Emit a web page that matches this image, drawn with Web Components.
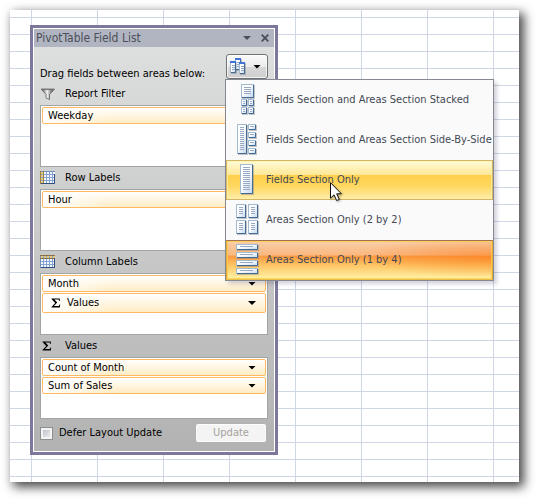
<!DOCTYPE html>
<html lang="en">
<head>
<meta charset="utf-8">
<title>PivotTable Field List</title>
<style>
body { margin: 0; background: #fff; color: #000; font: 11px/16px "DejaVu Sans Condensed", "DejaVu Sans", sans-serif; }
</style>
</head>
<body>
<work-sheet>
  <pivot-panel heading="PivotTable Field List">
    <area-section icon="filter" label="Report Filter"><field-chip>Weekday</field-chip></area-section>
    <area-section icon="rows" label="Row Labels"><field-chip>Hour</field-chip></area-section>
    <area-section icon="columns" label="Column Labels"><field-chip>Month</field-chip><field-chip sigma>Values</field-chip></area-section>
    <area-section icon="sigma" label="Values"><field-chip>Count of Month</field-chip><field-chip>Sum of Sales</field-chip></area-section>
  </pivot-panel>
</work-sheet>
<script>
const page = (x, y, w, h, lines = []) =>
  `<rect x="${x + 1}" y="${y + 1}" width="${w}" height="${h}" fill="#6b7687" opacity=".4"/>
   <rect x="${x + .5}" y="${y + .5}" width="${w - 1}" height="${h - 1}" fill="url(#pg)" stroke="#a3bad3"/>
   <path d="M${x + w - .5} ${y + 1}V${y + h - .5}H${x + 1}" fill="none" stroke="#456a92"/>` +
  lines.map(([lx, ly, lw]) => `<path d="M${lx} ${ly + .5}h${lw}" stroke="#98a9c6"/>`).join('');
const range = (from, to, step) => { const a = []; for (let i = from; i <= to; i += step) a.push(i); return a; };
const svg = (w, h, body) => `<svg width="${w}" height="${h}" viewBox="0 0 ${w} ${h}" aria-hidden="true">
  <defs><linearGradient id="pg" x2="1" y2="1"><stop offset=".4" stop-color="#fff"/><stop offset="1" stop-color="#c3d7ef"/></linearGradient>
  <linearGradient id="fn"><stop stop-color="#333"/><stop offset=".45" stop-color="#f5f5f5"/><stop offset="1" stop-color="#222"/></linearGradient></defs>${body}</svg>`;
const grid = (side) => svg(16, 14,
  `<rect x=".5" y=".5" width="14" height="12" fill="#86a3cf" stroke="#7590b8"/>` +
  range(1, 10, 3).map(y => range(1, 13, 3).map(x =>
    `<rect x="${x}" y="${y}" width="2" height="2" fill="${(side === 'rows' ? x < 4 : y < 3) ? '#e8ce7c' : '#f4f8ff'}"/>`).join('')).join('') +
  (side === 'rows' ? '<path d="M.5 0V13M3.5 0V13" stroke="#9b8244"/>' : '<path d="M0 .5H15M0 3.5H15" stroke="#85704a"/>') +
  `<path d="M14.5 3V12.5H1" fill="none" stroke="#304f80"/>`);
const sigma = svg(10, 10, '<path d="M.5 .5H8.8V3H8.2L7.6 1.6H3.4L6.2 4.6L3 8H7.8L8.6 6.4H9.2L8.8 9.5H.5V8.9L4.2 5L.5 1.1Z" fill="#000"/>');
const icons = {
  filter: svg(16, 13, '<path d="M1 1H14.5L9.5 6.5V11.5L6 10V6.5Z" fill="url(#fn)" stroke="#555" stroke-width=".7"/><path d="M1 1.5H14" stroke="#777"/>'),
  rows: grid('rows'),
  columns: grid('columns'),
  sigma,
  layout: svg(16, 17, [[5, 0], [0, 3], [9, 4]].map(([x, y]) =>
    page(x, y, 6, 12, range(y + 4, y + 9, 2).map(l => [x + 2, l, 3])) + `<path d="M${x} ${y + 1}h6" stroke="#3f73d8" stroke-width="2"/>`).join('')),
  stacked: svg(24, 32, page(6, 0, 13, 14, range(3, 9, 2).map(l => [9, l, 7])) +
    [[6, 15], [13, 15], [6, 23], [13, 23]].map(([x, y]) => page(x, y, 6, 7, [[x + 2, y + 2, 2], [x + 2, y + 4, 2]])).join('')),
  side: svg(24, 32, page(2, 0, 10, 30, range(3, 25, 2).map(l => [5, l, 4])) +
    [0, 8, 16, 24].map(y => page(13, y, 8, 6, [[15, y + 2, 4]])).join('')),
  fields: svg(24, 32, page(5, 0, 13, 30, range(3, 25, 2).map(l => [8, l, 7]))),
  two: svg(24, 32, [[1, 0], [13, 0], [1, 16], [13, 16]].map(([x, y]) =>
    page(x, y, 10, 14, range(y + 3, y + 9, 2).map(l => [x + 3, l, 4]))).join('')),
  four: svg(24, 32, [0, 8, 16, 24].map(y => page(1, y, 22, 6, [[5, y + 2, 13]])).join('')),
};
const define = (name, html, setup) => customElements.define(name, class extends HTMLElement {
  constructor() {
    super();
    const root = this.attachShadow({ mode: 'open' });
    const t = document.createElement('template');
    t.innerHTML = typeof html === 'function' ? html(this) : html;
    root.append(t.content.cloneNode(true));
  }
});

define('work-sheet', `<style>
  :host { display: block; box-sizing: border-box; margin: 10px 18px 18px 10px; padding: 15px 20px 27px;
    background:
      repeating-linear-gradient(90deg, transparent 0 21px, #cfd6e5 21px 22px, transparent 22px 66px),
      repeating-linear-gradient(transparent 0 7px, #cfd6e5 7px 8px, transparent 8px 17px) #fff;
    box-shadow: 4px 4px 10px 1px rgba(0,0,0,.72); }
</style><slot></slot>`);

define('drop-arrow', `<style>
  :host { display: block; flex: none; width: 8px; height: 4px; background: currentColor; clip-path: polygon(0 0, 100% 0, 50% 100%); }
</style>`);

define('field-chip', el => `<style>
  :host { display: block; margin-bottom: 1px; }
  button { display: flex; align-items: center; box-sizing: border-box; width: 100%; height: 17px; margin: 0; padding: 0 9px 0 5px;
    border: 1px solid #ffb864; border-radius: 2px; font: inherit; color: #000; text-align: left;
    background: linear-gradient(90deg, #fff, transparent 30%), linear-gradient(#fff, #ffecc4); }
  :host([sigma]) button { height: 20px; padding-left: 8px; }
  span { flex: 1; display: flex; align-items: center; gap: 6px; }
</style><button type="button"><span>${el.hasAttribute('sigma') ? sigma : ''}<slot></slot></span><drop-arrow></drop-arrow></button>`);

define('area-section', el => `<style>
  :host { display: block; }
  h2 { display: flex; align-items: center; gap: 9px; margin: 0; height: 22px; font: inherit; }
  i { flex: none; display: flex; width: 16px; }
  i.sigma { box-sizing: border-box; padding-left: 2px; }
  div { box-sizing: border-box; min-height: 62px; padding: 1px; border: 1px solid #a3a5a5; background: #fff; }
</style><h2><i class="${el.getAttribute('icon')}">${icons[el.getAttribute('icon')]}</i>${el.getAttribute('label')}</h2><div><slot></slot></div>`);

define('menu-option', el => `<style>
  :host { display: block; }
  button { display: flex; align-items: center; gap: 7px; box-sizing: border-box; width: 100%; height: 40px; margin: 0; padding: 0 0 0 8px;
    border: 1px solid transparent; background: none; font: inherit; color: #434955; text-align: left; white-space: nowrap; }
  svg { display: block; flex: none; }
  :host([state=hover]) button { border-color: #d4b565; background: linear-gradient(#fffbd8, #ffe794 37%, #ffd04c 38%, #ffd75f 65%, #ffedaa);
    box-shadow: inset 0 0 0 1px rgba(255,242,170,.7); }
  :host([state=checked]) button { border-color: #a07250 #e2a93c #e8bf4c; background: radial-gradient(ellipse 50% 55% at 100% 42%, rgba(250,120,20,.5), transparent), linear-gradient(#f8cfa9, #fbb880 37%, #fb9a40 40%, #fec767 65%, #fff2a5);
    box-shadow: inset 0 0 0 1px rgba(255,205,70,.75); }
</style><button type="button" role="menuitemradio" aria-checked="${el.getAttribute('state') === 'checked'}">${icons[el.getAttribute('icon')]}<slot></slot></button>`);

define('mouse-pointer', `<style>
  :host { position: absolute; left: 104px; top: 102px; pointer-events: none; }
  svg { display: block; filter: drop-shadow(1px 1px 1px rgba(0,0,0,.35)); }
</style><svg width="13" height="20" viewBox="0 0 13 20" aria-hidden="true"><path d="M.5 .7V16.2L4 12.8L6.7 18.6L9.3 17.4L6.7 11.8H11.4Z" fill="#fff" stroke="#111"/></svg>`);

define('layout-menu', `<style>
  :host { position: relative; display: block; }
  .toggle { display: flex; align-items: center; gap: 7px; box-sizing: border-box; width: 42px; height: 25px; margin: 0; padding: 0 6px 0 3px;
    border: 1px solid #6f7473; border-radius: 3px; color: #000;
    background: linear-gradient(#fafafa, #ebebeb 50%, #d8d8d8 51%, #cfcfcf); box-shadow: inset 0 0 0 1px rgba(255,255,255,.7); }
  svg { display: block; flex: none; }
  .menu { position: absolute; z-index: 2; top: 100%; left: -1px; border: 1px solid #858992; background: #fafafa;
    box-shadow: 3px 3px 4px rgba(60,50,90,.22); }
</style>
<button class="toggle" type="button" aria-haspopup="menu" aria-expanded="true" aria-label="Layout">${icons.layout}<drop-arrow></drop-arrow></button>
<div class="menu" role="menu">
  <menu-option icon="stacked">Fields Section and Areas Section Stacked</menu-option>
  <menu-option icon="side">Fields Section and Areas Section Side-By-Side</menu-option>
  <menu-option icon="fields" state="hover">Fields Section Only</menu-option>
  <menu-option icon="two">Areas Section Only (2 by 2)</menu-option>
  <menu-option icon="four" state="checked">Areas Section Only (1 by 4)</menu-option>
  <mouse-pointer></mouse-pointer>
</div>`);

define('pivot-panel', el => `<style>
  :host { display: block; box-sizing: border-box; width: 100%; max-width: 248px; border: 3px solid #7b789b; background: #fff; }
  .frame { border: 1px solid #fff; background: linear-gradient(#dfe1e0, #b2b2b2); }
  header { display: flex; align-items: center; gap: 10px; height: 18px; padding: 0 5px 0 2px; background: #b1b5c1; color: #4b4f5a; }
  h1 { flex: 1; margin: 0; font: inherit; font-size: 12px; }
  header button { display: flex; padding: 0; border: 0; background: none; color: inherit; }
  main { padding: 7px 6px 0; }
  .top { display: flex; align-items: flex-start; justify-content: space-between; height: 29px; }
  .top p { margin: 12px 0 0; }
  footer { display: flex; align-items: center; justify-content: space-between; padding: 4px 7px 8px 6px; }
  label { display: flex; align-items: center; gap: 6px; }
  input { appearance: none; box-sizing: border-box; width: 13px; height: 13px; margin: 0; border: 1px solid #8e8f8f;
    background: linear-gradient(135deg, #b4bac4, #f6f6f6); box-shadow: inset 0 0 0 2px #f4f4f4; }
  .update { box-sizing: border-box; width: 72px; height: 20px; padding: 0; border: 1px solid #adb2b5; border-radius: 3px; background: #f4f4f4;
    box-shadow: inset 0 0 0 1px #fcfcfc; font: inherit; color: #a6a29e; }
</style>
<div class="frame">
  <header><h1>${el.getAttribute('heading')}</h1>
    <button type="button" aria-label="Options"><drop-arrow></drop-arrow></button>
    <button type="button" aria-label="Close"><svg width="8" height="8" viewBox="0 0 8 8" aria-hidden="true"><path d="M.7 .7L7.3 7.3M7.3 .7L.7 7.3" stroke="currentColor" stroke-width="1.8"/></svg></button>
  </header>
  <main>
    <div class="top"><p>Drag fields between areas below:</p><layout-menu></layout-menu></div>
    <slot></slot>
  </main>
  <footer><label><input type="checkbox">Defer Layout Update</label><button class="update" type="button" disabled>Update</button></footer>
</div>`);
</script>
</body>
</html>
